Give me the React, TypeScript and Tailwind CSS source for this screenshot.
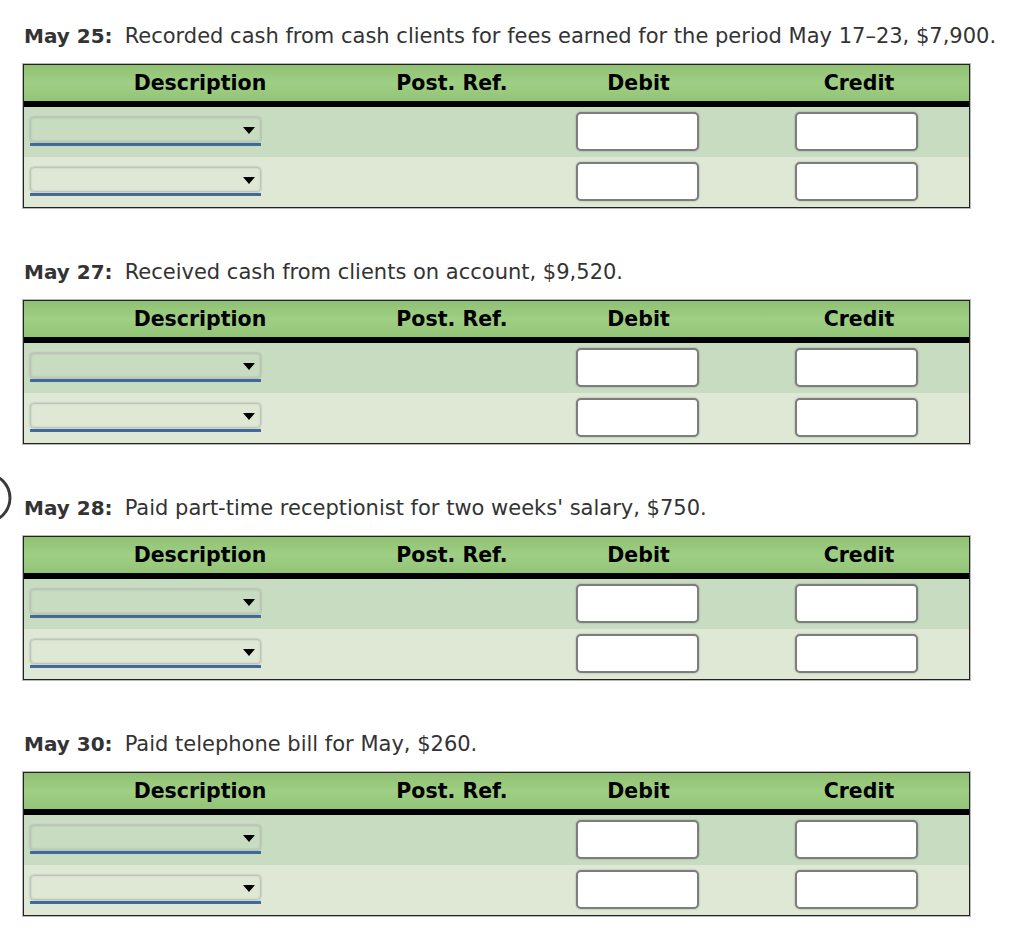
import React from "react";

type Entry = {
  date: string;
  text: string;
};

const entries: Entry[] = [
  { date: "May 25:", text: "Recorded cash from cash clients for fees earned for the period May 17–23, $7,900." },
  { date: "May 27:", text: "Received cash from clients on account, $9,520." },
  { date: "May 28:", text: "Paid part-time receptionist for two weeks' salary, $750." },
  { date: "May 30:", text: "Paid telephone bill for May, $260." },
];

function AccountSelect() {
  return (
    <div className="w-[231px]">
      <div className="relative h-[25px] rounded-[4px] border border-[#bfc3bb] shadow-[inset_0_0_2px_rgba(0,0,0,0.15),0_0_2px_rgba(0,0,0,0.3)]">
        <span className="absolute right-[5px] top-[9px] h-0 w-0 border-x-[6px] border-t-[7px] border-x-transparent border-t-black" />
      </div>
      <div className="mt-[1px] h-[3px] bg-[#3f6a9a]" />
    </div>
  );
}

function AmountInput() {
  return (
    <div className="h-[39px] w-[123px] rounded-[5px] border-2 border-[#7d7d7d] bg-white shadow-[0_0_2px_rgba(0,0,0,0.3)]" />
  );
}

function JournalRow({ shade }: { shade: string }) {
  return (
    <div className={`grid h-[50px] grid-cols-[352px_152px_221px_1fr] ${shade}`}>
      <div className="pl-[6px] pt-[10px]">
        <AccountSelect />
      </div>
      <div />
      <div className="pl-[48px] pt-[5px]">
        <AmountInput />
      </div>
      <div className="pl-[46px] pt-[5px]">
        <AmountInput />
      </div>
    </div>
  );
}

function JournalTable() {
  return (
    <div className="w-[947px] border border-[#222] outline outline-1 outline-[#b9b9b9]">
      <div className="grid h-[36px] grid-cols-[352px_152px_221px_1fr] items-center bg-gradient-to-b from-[#8fc073] via-[#9fcf84] to-[#92c477] text-[20.5px] font-bold text-black">
        <div className="text-center">Description</div>
        <div className="text-center">Post. Ref.</div>
        <div className="text-center">Debit</div>
        <div className="text-center">Credit</div>
      </div>
      <div className="h-[6px] bg-black" />
      <JournalRow shade="bg-[#c8dcc1]" />
      <JournalRow shade="bg-[#dfe8d5]" />
    </div>
  );
}

export default function App() {
  return (
    <div
      className="relative min-h-[942px] w-[1024px] overflow-hidden bg-white pl-[23px] pt-[22px]"
      style={{ fontFamily: "'DejaVu Sans', Verdana, sans-serif" }}
    >
      <svg className="absolute left-0 top-[472px]" width="14" height="52" viewBox="0 0 14 52">
        <circle cx="-14" cy="26" r="24" fill="none" stroke="#3a3a3a" strokeWidth="3" />
      </svg>
      <div className="flex flex-col gap-[50px]">
        {entries.map((e) => (
          <section key={e.date}>
            <p className="h-[28px] whitespace-nowrap pl-[1px] leading-[28px] text-[#333]">
              <span className="text-[20px] font-bold">{e.date}</span>
              <span className="ml-[12px] text-[21px]">{e.text}</span>
            </p>
            <div className="mt-[14px]">
              <JournalTable />
            </div>
          </section>
        ))}
      </div>
    </div>
  );
}
